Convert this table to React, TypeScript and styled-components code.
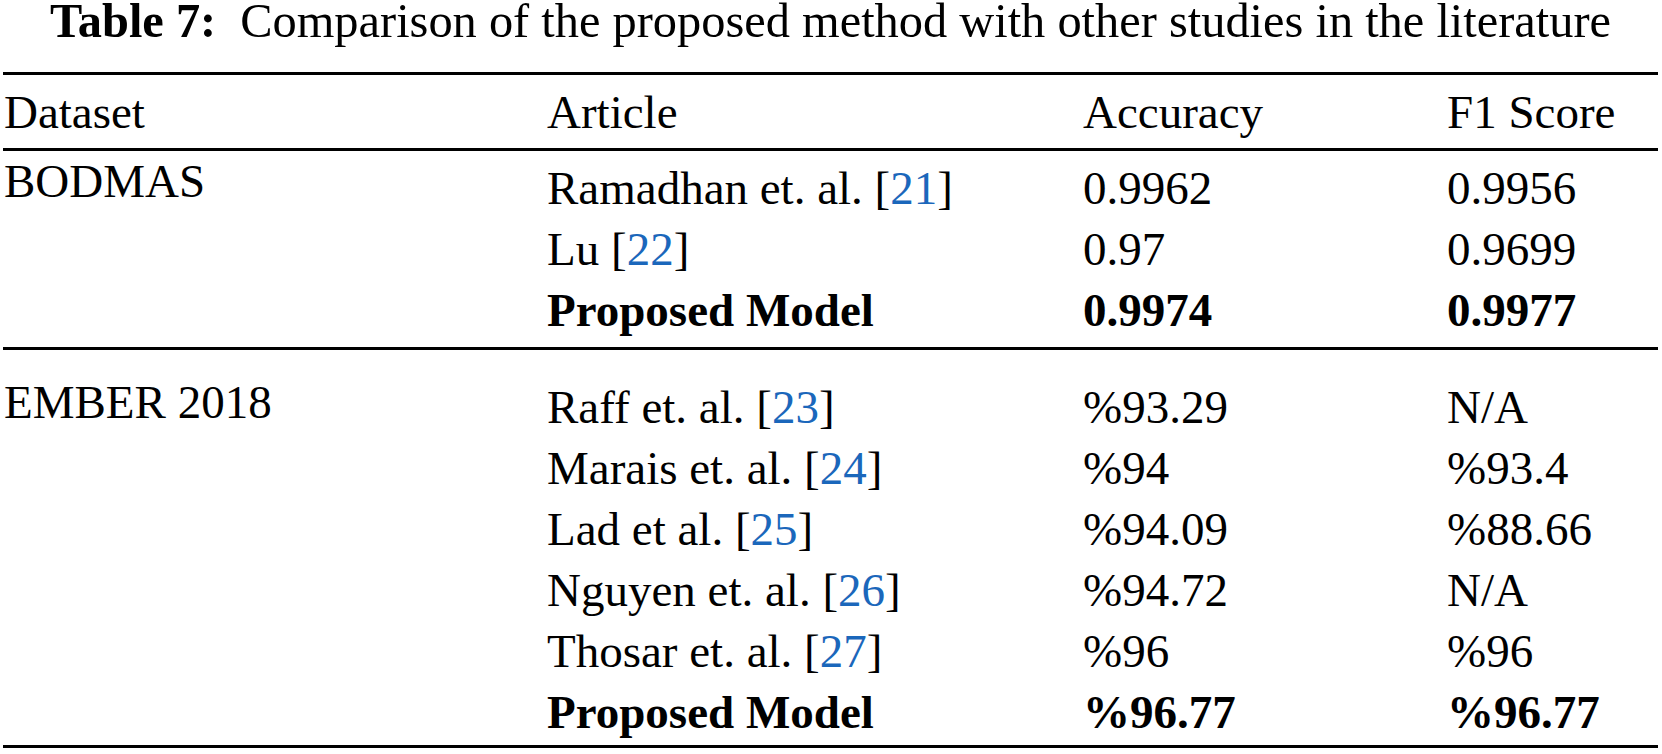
import React from "react";
import styled, { createGlobalStyle } from "styled-components";

const Global = createGlobalStyle`
  html, body { margin: 0; padding: 0; background: #ffffff; }
  body { font-family: "Liberation Serif", "Times New Roman", serif; color: #000; }
`;

const Page = styled.div`
  width: 1662px;
  padding: 0 4px 0 3px;
  box-sizing: border-box;
`;

const Caption = styled.div`
  font-size: 48.4px;
  line-height: 42px;
  height: 42px;
  margin-bottom: 30px;
  text-align: center;
  white-space: nowrap;
`;

const CaptionLabel = styled.b`
  font-weight: bold;
  margin-right: 24px;
`;

const Rule = styled.div`
  height: 3px;
  background: #000;
`;

const Grid = styled.div<{ $pt?: number; $pb?: number }>`
  display: grid;
  grid-template-columns: 543px 536px 364px 1fr;
  padding-top: ${(p) => p.$pt ?? 0}px;
  padding-bottom: ${(p) => p.$pb ?? 0}px;
  font-size: 47px;
  line-height: 61px;
`;

const Cell = styled.div<{ $bold?: boolean }>`
  padding-left: 1px;
  white-space: nowrap;
  font-weight: ${(p) => (p.$bold ? "bold" : "normal")};
`;

const DatasetCell = styled(Cell)<{ $offset: number }>`
  grid-row: 1 / span 20;
  grid-column: 1;
  padding-top: ${(p) => p.$offset}px;
`;

const Rows = styled.div<{ $pt: number; $pb: number }>`
  grid-column: 2 / span 3;
  display: grid;
  grid-template-columns: 536px 364px 1fr;
  padding-top: ${(p) => p.$pt}px;
  padding-bottom: ${(p) => p.$pb}px;
`;

const Ref = styled.span`
  color: #1b67bb;
`;

type Row = { author: string; ref?: string; acc: string; f1: string; bold?: boolean };

const sections: { name: string; offset: number; pt: number; pb: number; rows: Row[] }[] = [
  {
    name: "BODMAS",
    offset: 0,
    pt: 7,
    pb: 6,
    rows: [
      { author: "Ramadhan et. al.", ref: "21", acc: "0.9962", f1: "0.9956" },
      { author: "Lu", ref: "22", acc: "0.97", f1: "0.9699" },
      { author: "Proposed Model", acc: "0.9974", f1: "0.9977", bold: true },
    ],
  },
  {
    name: "EMBER 2018",
    offset: 22,
    pt: 27,
    pb: 2,
    rows: [
      { author: "Raff et. al.", ref: "23", acc: "%93.29", f1: "N/A" },
      { author: "Marais et. al.", ref: "24", acc: "%94", f1: "%93.4" },
      { author: "Lad et al.", ref: "25", acc: "%94.09", f1: "%88.66" },
      { author: "Nguyen et. al.", ref: "26", acc: "%94.72", f1: "N/A" },
      { author: "Thosar et. al.", ref: "27", acc: "%96", f1: "%96" },
      { author: "Proposed Model", acc: "%96.77", f1: "%96.77", bold: true },
    ],
  },
];

export default function App() {
  return (
    <Page>
      <Global />
      <Caption>
        <CaptionLabel>Table 7:</CaptionLabel>Comparison of the proposed method with other studies in the literature
      </Caption>
      <Rule />
      <Grid $pt={7} $pb={5}>
        <Cell>Dataset</Cell>
        <Cell>Article</Cell>
        <Cell>Accuracy</Cell>
        <Cell>F1 Score</Cell>
      </Grid>
      <Rule />
      {sections.map((s) => (
        <React.Fragment key={s.name}>
          <Grid>
            <DatasetCell $offset={s.offset}>{s.name}</DatasetCell>
            <Rows $pt={s.pt} $pb={s.pb}>
              {s.rows.map((r) => (
                <React.Fragment key={r.author + r.acc}>
                  <Cell $bold={r.bold}>
                    {r.author}
                    {r.ref && (
                      <>
                        {" ["}
                        <Ref>{r.ref}</Ref>
                        {"]"}
                      </>
                    )}
                  </Cell>
                  <Cell $bold={r.bold}>{r.acc}</Cell>
                  <Cell $bold={r.bold}>{r.f1}</Cell>
                </React.Fragment>
              ))}
            </Rows>
          </Grid>
          <Rule />
        </React.Fragment>
      ))}
    </Page>
  );
}
